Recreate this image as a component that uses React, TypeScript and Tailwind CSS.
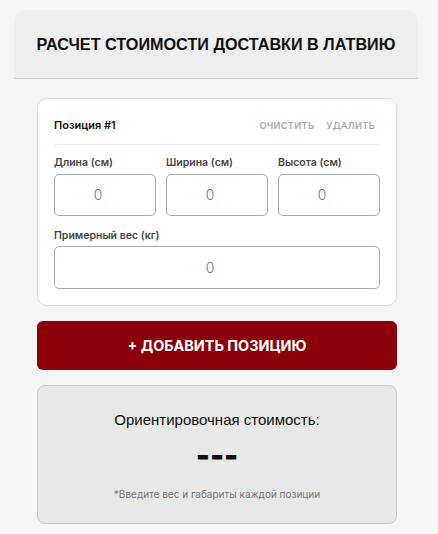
import React, { useState } from 'react';

type Item = { length: string; width: string; height: string; weight: string };

const emptyItem: Item = { length: '', width: '', height: '', weight: '' };

function Field({ label, value, tall, onChange }: { label: string; value: string; tall?: boolean; onChange: (v: string) => void }) {
  return (
    <label className="flex flex-col">
      <span className="mb-[5px] text-[10.5px] font-semibold leading-none text-[#444]">{label}</span>
      <input
        type="text"
        inputMode="decimal"
        placeholder="0"
        value={value}
        onChange={(e) => onChange(e.target.value)}
        className={`${tall ? 'h-[43px]' : 'h-[42px]'} w-full rounded-[5px] border border-[#aaa] bg-white pr-[14px] text-center text-[14px] font-light text-[#333] outline-none placeholder:text-[#777]`}
      />
    </label>
  );
}

export default function App() {
  const [items, setItems] = useState<Item[]>([{ ...emptyItem }]);

  const update = (i: number, key: keyof Item, v: string) =>
    setItems((prev) => prev.map((it, idx) => (idx === i ? { ...it, [key]: v } : it)));

  return (
    <div className="min-h-screen bg-[#f5f5f5] pt-[10px] font-['Inter','Liberation_Sans',sans-serif]">
      <div className="ml-[14px] w-[404px]">
        {/* Header */}
        <div className="flex h-[69px] items-center justify-center rounded-t-[12px] border-b border-[#cfcfcf] bg-[#eeeeee]">
          <h1 className="font-['Liberation_Sans',Arial,sans-serif] text-[16.2px] font-bold text-[#111]">
            РАСЧЕТ СТОИМОСТИ ДОСТАВКИ В ЛАТВИЮ
          </h1>
        </div>

        <div className="ml-[23px] w-[360px] pt-[19px]">
          {items.map((item, i) => (
            <div key={i} className="rounded-[10px] border border-[#ddd] bg-white px-[16px] pb-[16px] pt-[21px]">
              <div className="flex items-center justify-between border-b border-[#eee] pb-[13px]">
                <span className="text-[11px] font-semibold leading-none text-[#111]">Позиция #{i + 1}</span>
                <div className="flex gap-[12px] pr-[5px] text-[9.2px] font-semibold leading-none tracking-[0.3px] text-[#aaa]">
                  <button onClick={() => setItems((p) => p.map((it, idx) => (idx === i ? { ...emptyItem } : it)))}>
                    ОЧИСТИТЬ
                  </button>
                  <button onClick={() => setItems((p) => (p.length > 1 ? p.filter((_, idx) => idx !== i) : p))}>
                    УДАЛИТЬ
                  </button>
                </div>
              </div>
              <div className="mt-[13px] grid grid-cols-3 gap-[10px]">
                <Field label="Длина (см)" value={item.length} onChange={(v) => update(i, 'length', v)} />
                <Field label="Ширина (см)" value={item.width} onChange={(v) => update(i, 'width', v)} />
                <Field label="Высота (см)" value={item.height} onChange={(v) => update(i, 'height', v)} />
              </div>
              <div className="mt-[15px]">
                <Field label="Примерный вес (кг)" value={item.weight} tall onChange={(v) => update(i, 'weight', v)} />
              </div>
            </div>
          ))}

          <button
            onClick={() => setItems((p) => [...p, { ...emptyItem }])}
            className="mt-[15px] flex h-[49px] w-full items-center justify-center rounded-[6px] bg-[#8b0008] text-[14.4px] font-bold text-white"
          >
            + ДОБАВИТЬ ПОЗИЦИЮ
          </button>

          {/* Result */}
          <div className="mt-[15px] flex h-[139px] flex-col items-center rounded-[8px] border border-[#ccc] bg-[#e8e8e8] pt-[25px]">
            <span className="font-['Liberation_Sans',Arial,sans-serif] text-[15px] leading-[18px] text-[#111]">
              Ориентировочная стоимость:
            </span>
            <span className="mt-[16px] text-[30px] font-black leading-[20px] text-[#111]">---</span>
            <span className="mt-[22px] text-[10px] text-[#777]">*Введите вес и габариты каждой позиции</span>
          </div>
        </div>
      </div>
    </div>
  );
}
